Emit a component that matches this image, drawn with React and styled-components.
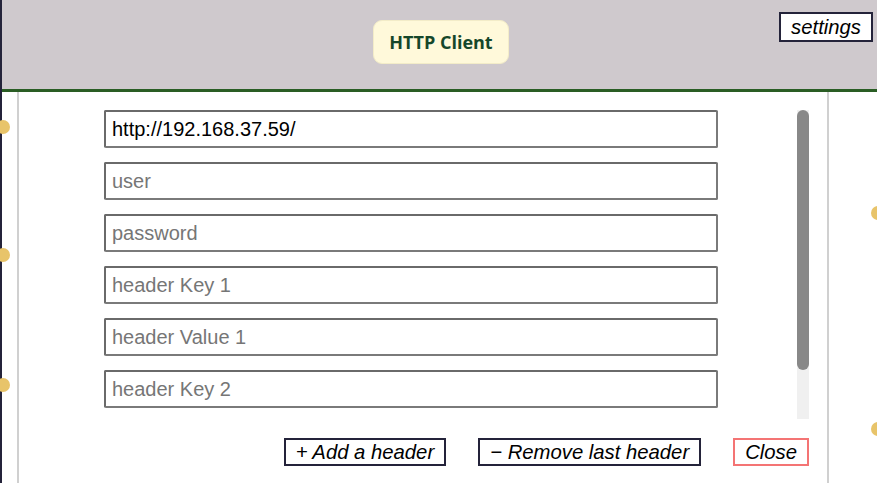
import React from "react";
import styled, { createGlobalStyle } from "styled-components";

const Global = createGlobalStyle`
  html, body { margin: 0; padding: 0; background: #fff; }
  body { font-family: "Liberation Sans", Arial, sans-serif; overflow: hidden; }
  * { box-sizing: border-box; }
`;

const Page = styled.div`
  position: relative;
  width: 877px;
  height: 483px;
  border-left: 2px solid #24233a;
  display: flex;
  flex-direction: column;
`;

const Header = styled.header`
  position: relative;
  height: 92px;
  flex: none;
  background: #cfc9cd;
  border-bottom: 3px solid #2a5d24;
  display: flex;
  justify-content: center;
  align-items: flex-start;
  padding-top: 20px;
  padding-left: 3px;
`;

const Title = styled.div`
  height: 44px;
  padding: 0 15px;
  background: #fff9da;
  border: 1px solid #f3ecc8;
  border-radius: 9px;
  display: flex;
  align-items: center;
  font-family: "Open Sans", "Noto Sans", sans-serif;
  font-weight: 700;
  font-size: 18px;
  color: #15472a;
`;

const SettingsButton = styled.button`
  position: absolute;
  top: 12px;
  right: 4px;
  height: 30px;
  padding: 0 10px;
  background: #fff;
  border: 2px solid #24233a;
  font-family: "Liberation Sans", Arial, sans-serif;
  font-style: italic;
  font-size: 20.3px;
  color: #000;
  cursor: pointer;
`;

const Body = styled.div`
  position: relative;
  flex: 1;
  display: flex;
`;

const Dot = styled.span`
  position: absolute;
  z-index: 2;
  width: 14px;
  height: 14px;
  border-radius: 50%;
  background: #e8c46a;
`;

const Modal = styled.div`
  margin-left: 15px;
  width: 812px;
  border-left: 2px solid #d0d0d0;
  border-right: 2px solid #d0d0d0;
  background: #fff;
  padding: 18px 18px 0 0;
  display: flex;
  flex-direction: column;
`;

const ScrollRow = styled.div`
  display: flex;
  height: 309px;
`;

const Scroller = styled.div`
  flex: 1;
  overflow: hidden;
  padding-left: 85px;
`;

const Track = styled.div`
  position: relative;
  width: 12px;
  flex: none;
  background: #f0f0f0;
`;

const Thumb = styled.div`
  position: absolute;
  left: 0;
  top: 0;
  width: 12px;
  background: #888;
  border-radius: 6px;
`;

const Field = styled.input`
  display: block;
  width: 614px;
  height: 38px;
  margin: 0 0 14px 0;
  padding: 0 6px;
  border: 2px solid #7a7a7a;
  border-top-color: #6a6a6a;
  border-left-color: #6a6a6a;
  border-radius: 2px;
  font-family: "Liberation Sans", Arial, sans-serif;
  font-size: 20px;
  color: #000;
  outline: none;
  &::placeholder { color: #767676; }
`;

const Actions = styled.div`
  display: flex;
  justify-content: flex-end;
  gap: 32px;
  margin-top: 19px;
`;

const Action = styled.button`
  height: 28px;
  padding: 0 10px;
  background: #fff;
  border: 2px solid ${(p) => (p.$danger ? "#f47474" : "#24233a")};
  font-family: "Liberation Sans", Arial, sans-serif;
  font-style: italic;
  font-size: 20.3px;
  color: #000;
  cursor: pointer;
`;

const fields = [
  { value: "http://192.168.37.59/", placeholder: "url" },
  { placeholder: "user" },
  { placeholder: "password" },
  { placeholder: "header Key 1" },
  { placeholder: "header Value 1" },
  { placeholder: "header Key 2" },
  { placeholder: "header Value 2" },
];

const dots = [
  { left: -6, top: 28 },
  { left: -6, top: 156 },
  { left: -6, top: 286 },
  { left: 869, top: 114 },
  { left: 869, top: 330 },
];

const VIEW = 309;
const CONTENT = fields.length * 52;

export default function App() {
  const thumb = Math.round((VIEW * VIEW) / CONTENT) - 2;
  return (
    <>
      <Global />
      <Page>
        <Header>
          <Title>HTTP Client</Title>
          <SettingsButton>settings</SettingsButton>
        </Header>
        <Body>
          {dots.map((d, i) => (
            <Dot key={i} style={{ left: d.left, top: d.top }} />
          ))}
          <Modal>
            <ScrollRow>
              <Scroller>
                {fields.map((f, i) => (
                  <Field
                    key={i}
                    defaultValue={f.value}
                    placeholder={f.placeholder}
                    type={f.placeholder === "password" ? "password" : "text"}
                  />
                ))}
              </Scroller>
              <Track>
                <Thumb style={{ height: thumb }} />
              </Track>
            </ScrollRow>
            <Actions>
              <Action>+ Add a header</Action>
              <Action>− Remove last header</Action>
              <Action $danger>Close</Action>
            </Actions>
          </Modal>
        </Body>
      </Page>
    </>
  );
}
